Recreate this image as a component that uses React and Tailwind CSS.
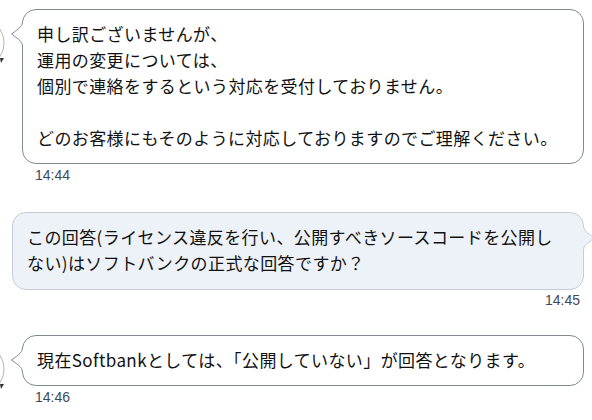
import React from 'react';

const FONT = { fontFamily: '"Noto Sans CJK JP", "Noto Sans", sans-serif' };

const LeftTail = () => (
  <svg className="absolute left-[-12px] top-[11px]" width="14" height="26" viewBox="0 0 14 26">
    <path d="M14 0 L11.5 0 C11.5 5, 9 7, 0.5 13 C9 19, 11.5 21, 11.5 26 L14 26 Z" fill="#ffffff" />
    <path d="M11.5 0 C11.5 5, 9 7, 0.5 13 C9 19, 11.5 21, 11.5 26" fill="none" stroke="#808a94" strokeWidth="1" />
  </svg>
);

const RightTail = () => (
  <svg className="absolute right-[-12px] top-[12px]" width="14" height="26" viewBox="0 0 14 26">
    <path d="M0 0 L2.5 0 C2.5 5, 5 7, 13.5 13 C5 19, 2.5 21, 2.5 26 L0 26 Z" fill="#edf1f8" />
    <path d="M2.5 0 C2.5 5, 5 7, 13.5 13 C5 19, 2.5 21, 2.5 26" fill="none" stroke="#c6ccd4" strokeWidth="1" />
  </svg>
);

const Avatar = () => (
  <svg className="absolute left-0 top-0" width="10" height="60" viewBox="0 0 10 60">
    <circle cx="-21" cy="34" r="25" fill="#ffffff" stroke="#b5b5b5" strokeWidth="1" />
    <polygon points="0,49 4,49 1,54" fill="#333333" />
  </svg>
);

const Received = ({ lines, time }) => (
  <div className="relative">
    <Avatar />
    <div className="relative ml-[22px] w-[562px] rounded-[14px] border border-[#808a94] bg-white px-[14px] pt-[11px] pb-[12px] text-[17px] leading-[26px] tracking-[0.4px] text-[#111]">
      <LeftTail />
      {lines.map((l, i) => (
        <div key={i} className="whitespace-nowrap">{l || '\u00a0'}</div>
      ))}
    </div>
    <div className="ml-[35px] mt-[3px] text-[14px] leading-[16px] text-[#3b4a5a]" style={{ fontFamily: '"Liberation Sans", Arial, sans-serif' }}>
      {time}
    </div>
  </div>
);

const Sent = ({ lines, time }) => (
  <div>
    <div className="relative ml-[12px] w-[572px] rounded-[14px] border border-[#c6ccd4] bg-[#edf1f8] px-[14px] pt-[11px] pb-[13px] text-[17px] leading-[26px] tracking-[0.4px] text-[#111]">
      <RightTail />
      {lines.map((l, i) => (
        <div key={i} className="whitespace-nowrap">{l}</div>
      ))}
    </div>
    <div className="mr-[12px] mt-[2px] text-right text-[14px] leading-[16px] text-[#3b4a5a]" style={{ fontFamily: '"Liberation Sans", Arial, sans-serif' }}>
      {time}
    </div>
  </div>
);

export default function App() {
  return (
    <div className="h-[420px] w-[592px] overflow-hidden bg-white pt-[9px]" style={FONT}>
      <Received
        lines={[
          '申し訳ございませんが、',
          '運用の変更については、',
          '個別で連絡をするという対応を受付しておりません。',
          '',
          'どのお客様にもそのように対応しておりますのでご理解ください。',
        ]}
        time="14:44"
      />
      <div className="mt-[29px]">
        <Sent
          lines={[
            'この回答(ライセンス違反を行い、公開すべきソースコードを公開し',
            'ない)はソフトバンクの正式な回答ですか？',
          ]}
          time="14:45"
        />
      </div>
      <div className="mt-[27px]">
        <Received lines={['現在Softbankとしては、「公開していない」が回答となります。']} time="14:46" />
      </div>
    </div>
  );
}
